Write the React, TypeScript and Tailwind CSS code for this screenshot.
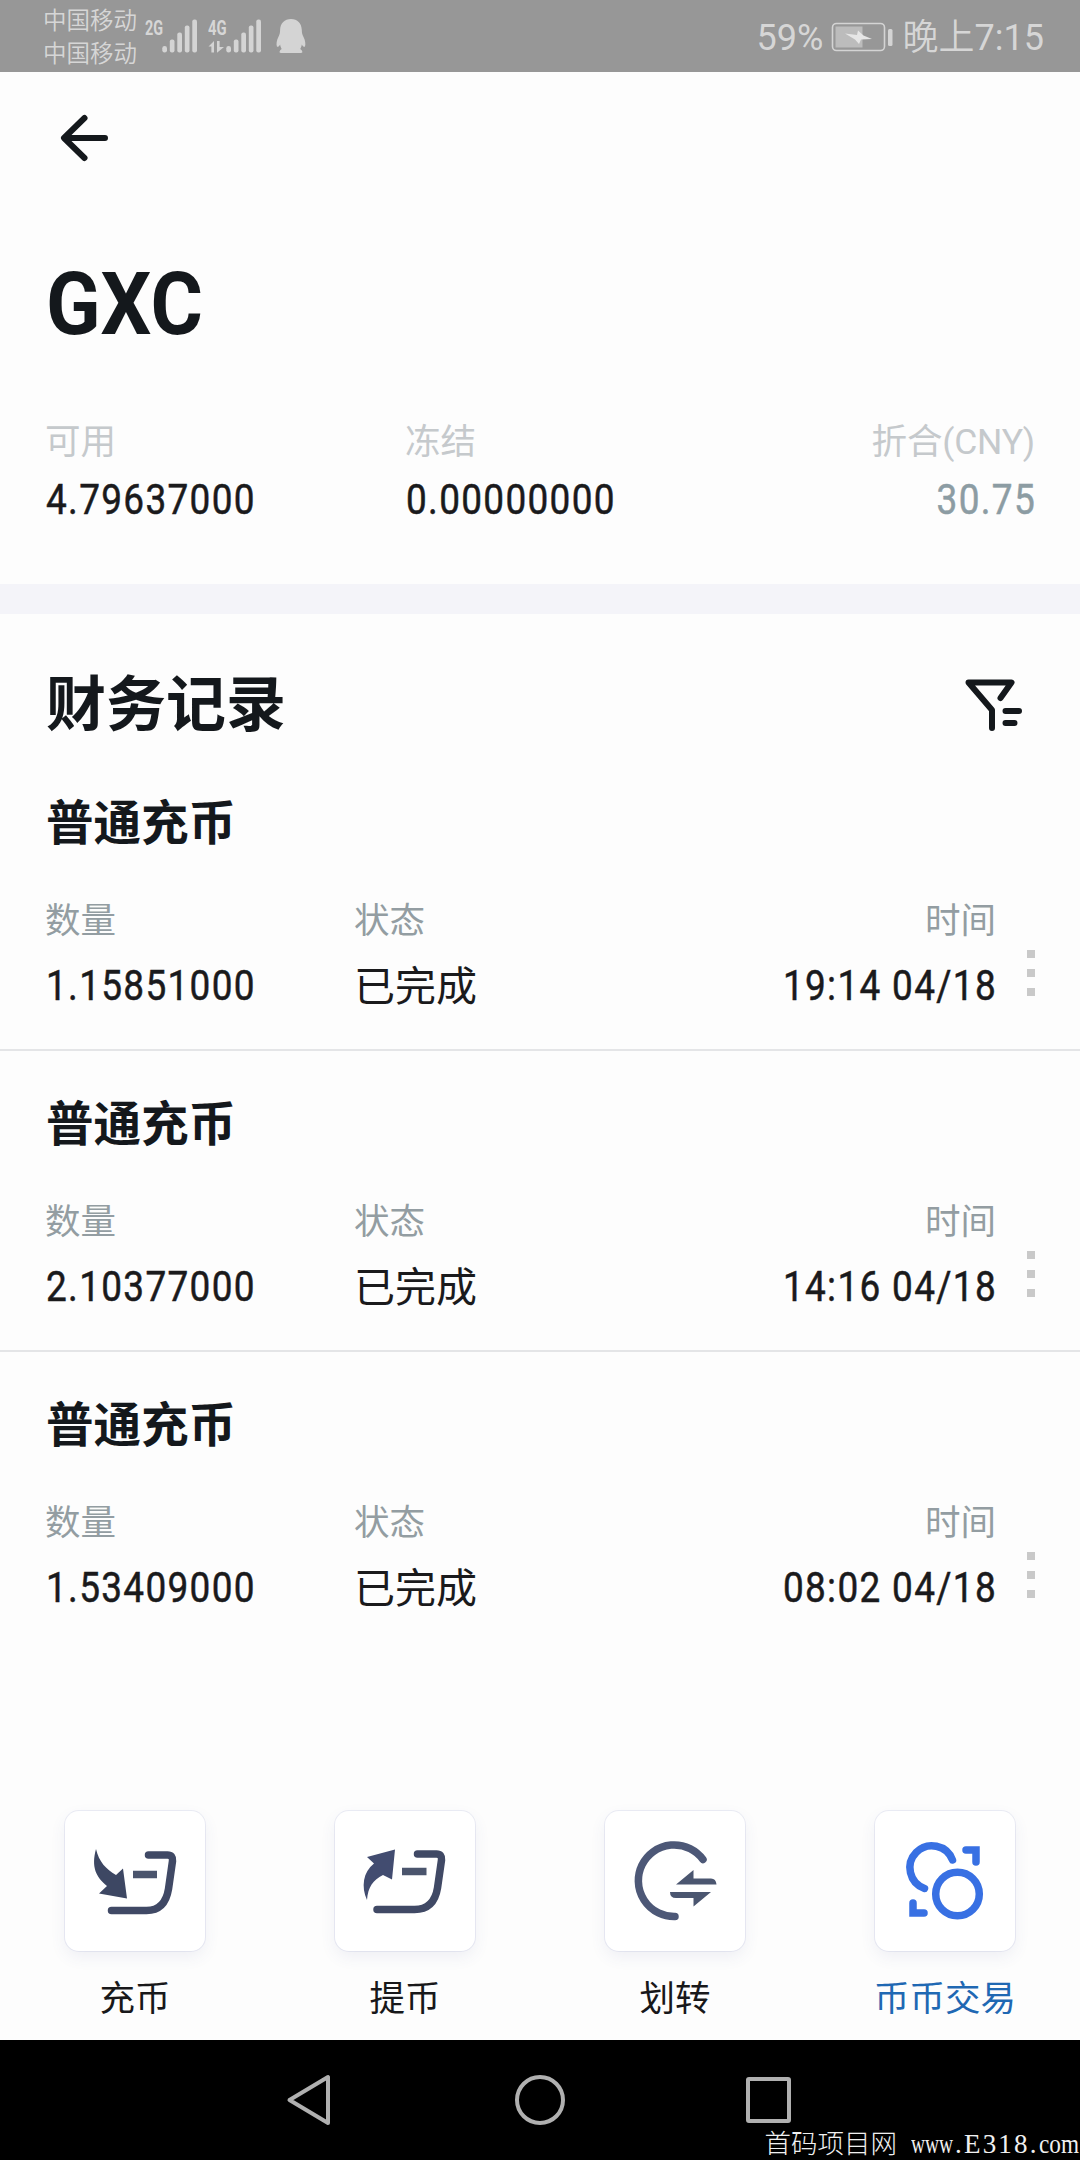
import type { ReactNode } from "react";
import { clsx } from "clsx";

interface FinanceRecord {
  type: string;
  amount: string;
  status: string;
  time: string;
}

const records: FinanceRecord[] = [
  { type: "普通充币", amount: "1.15851000", status: "已完成", time: "19:14 04/18" },
  { type: "普通充币", amount: "2.10377000", status: "已完成", time: "14:16 04/18" },
  { type: "普通充币", amount: "1.53409000", status: "已完成", time: "08:02 04/18" },
];

// Condensed digits with a little air between them
const Num = ({ children, right, className }: { children: ReactNode; right?: boolean; className: string }) => (
  <p
    className={clsx(
      "whitespace-nowrap text-[42px] leading-[50px] tracking-[1.5px] [-webkit-text-stroke:0.5px_currentColor]",
      right ? "mr-[-1px] origin-right scale-x-[0.88]" : "ml-[1px] origin-left scale-x-[0.88]",
      className,
    )}
  >
    {children}
  </p>
);

const SignalBars = () => (
  <svg width="36" height="34" viewBox="0 0 36 34" fill="#d4d4d4">
    <rect x="0.3" y="27" width="4.7" height="6.5" rx="2.3" />
    <rect x="7.8" y="20.5" width="4.7" height="13" rx="2" />
    <rect x="15.3" y="13.5" width="4.7" height="20" rx="2" />
    <rect x="22.8" y="6.5" width="4.7" height="27" rx="2" />
    <rect x="30.3" y="0.5" width="4.7" height="33" rx="2" />
  </svg>
);

const StatusBar = () => (
  <header className="flex h-[72px] justify-between bg-[#979797] pl-[43px] pr-[36px] text-[#d6d6d6]">
    <div className="flex">
      <div className="flex w-[102px] flex-col pt-[5px] text-[23.5px] font-[350] leading-[33px]">
        <span>中国移动</span>
        <span>中国移动</span>
      </div>
      <div className="flex w-[63px] pt-[19px]">
        <div className="w-[17px]">
          <span className="block origin-left scale-x-[0.72] text-[20px] font-bold leading-[18px]">2G</span>
        </div>
        <SignalBars />
      </div>
      <div className="flex w-[68px] pt-[19px]">
        <div className="w-[18px]">
          <span className="block w-[27px] origin-left scale-x-[0.74] text-[20px] font-bold leading-[18px]">4G</span>
          <svg width="18" height="12" viewBox="0 0 18 12" className="mt-[4px]" fill="#d4d4d4">
            <path d="M0.5 5.5L6 0v11.5H3.4V5.5zM9 0h2.6v6H16L9 11.8z" />
          </svg>
        </div>
        <SignalBars />
      </div>
      <svg width="30" height="36" viewBox="0 0 30 36" className="mt-[18px]" fill="#d4d4d4">
        <path d="M15 1C21.5 1 25.5 5 25.8 12c0 3 .5 4.5 1.7 7 1.8 3.5 2.3 7 1.5 9.5-.8 1-2.2-.2-3.2-2-.4 2.2-.8 3-1.6 4.5 1.5.8 2.2 2.3 2.2 3.1 0 .8-1 1-2.500 1H6c-1.5 0-2.500-.2-2.500-1 0-.8.7-2.3 2.2-3.1-.8-1.5-1.200-2.300-1.600-4.500-1 1.800-2.400 3-3.200 2C.1 26 .6 22.5 2.4 19c1.2-2.5 1.7-4 1.7-7C4.4 5 8.5 1 15 1z" />
      </svg>
    </div>
    <div className="flex items-center pt-[4px] text-[36px] leading-[40px]">
      <span className="w-[74px]">59%</span>
      <svg width="64" height="31" viewBox="0 0 64 31" className="mb-[2px] mr-[8px]">
        <rect x="1.5" y="1.5" width="52" height="27" rx="4" fill="none" stroke="#d4d4d4" strokeWidth="1.6" />
        <rect x="4.5" y="4.5" width="27" height="21" fill="#bcbcbc" />
        <path d="M14 11.5l12 1.5 1-4.5 5.5 5L41 17l-11 .5-2 4.5-4-4.5z" fill="#e6e6e6" />
        <rect x="57" y="7" width="4.5" height="17" rx="1.5" fill="#d4d4d4" />
      </svg>
      <span className="font-[350]">晚上</span>
      <span>7:15</span>
    </div>
  </header>
);

const AssetSummary = () => (
  <section className="h-[512px] px-[45px] pt-[38px]">
    <button type="button" className="block h-[56px] pl-[14px]">
      <svg width="52" height="56" viewBox="0 0 52 56" fill="none" stroke="#14181c" strokeWidth="6" strokeLinecap="round" strokeLinejoin="round">
        <path d="M25.5 8L5 28l20.5 20M6 28h40" />
      </svg>
    </button>
    <h1 className="ml-[1px] mt-[94px] h-[88px] w-[200px] origin-left scale-x-[0.91] text-[88px] font-bold leading-[88px] text-[#14181c]">
      GXC
    </h1>
    <div className="mt-[69px] flex">
      <div className="w-[360px]">
        <p className="text-[35.5px] leading-[50px] text-[#c5c9cc]">可用</p>
        <Num className="mt-[8px] text-[#1a1a1c]">4.79637000</Num>
      </div>
      <div className="w-[360px]">
        <p className="text-[35.5px] leading-[50px] text-[#c5c9cc]">冻结</p>
        <Num className="mt-[8px] text-[#1a1a1c]">0.00000000</Num>
      </div>
      <div className="flex-1 text-right">
        <p className="whitespace-nowrap text-[35.5px] leading-[50px] tracking-[-0.2px] text-[#c5c9cc]">折合(CNY)</p>
        <Num right className="mt-[8px] text-[#8c9ca3]">30.75</Num>
      </div>
    </div>
  </section>
);

const FilterIcon = () => (
  <svg width="58" height="56" viewBox="0 0 58 56" fill="none" stroke="#14181c" strokeWidth="6" strokeLinecap="round" strokeLinejoin="round">
    <path d="M35.5 20L46.5 4.5H3.5L27 32v18" />
    <path d="M40.5 33H54M40.5 45h9" />
  </svg>
);

const RecordItem = ({ record, last }: { record: FinanceRecord; last: boolean }) => (
  <li className={clsx("h-[301px] px-[45px]", !last && "border-b-2 border-[#e4e5e7]")}>
    <h3 className="ml-[1px] pt-[44px] text-[47.5px] font-bold leading-[60px] text-[#14181c]">{record.type}</h3>
    <div className="mt-[42px] flex">
      <div className="w-[309px]">
        <p className="text-[35.5px] leading-[50px] text-[#939da2]">数量</p>
        <Num className="mt-[15px] text-[#1a1a1c]">{record.amount}</Num>
      </div>
      <div className="w-[200px]">
        <p className="text-[35.5px] leading-[50px] text-[#939da2]">状态</p>
        <p className="mt-[16px] text-[41px] leading-[50px] text-[#1a1a1c]">{record.status}</p>
      </div>
      <div className="flex-1 text-right">
        <p className="text-[35.5px] leading-[50px] text-[#939da2]">时间</p>
        <Num right className="mt-[15px] text-[#1a1a1c]">{record.time}</Num>
      </div>
      <div className="ml-[31px] flex w-[8px] flex-col gap-[11px] pt-[54px]">
        <i className="size-[8px] bg-[#c9c9c9]" />
        <i className="size-[8px] bg-[#c9c9c9]" />
        <i className="size-[8px] bg-[#c9c9c9]" />
      </div>
    </div>
  </li>
);

const DepositIcon = () => (
  <svg width="140" height="140" viewBox="0 0 140 140" fill="none">
    <path d="M31 38c-5 18 0 28 11 37l-8 7.5 28 5-4-30-7 6.5C41 58 34 51 31 38z" fill="#3d4763" />
    <path d="M83.5 44h19q5.5 0 5 6l-4 28q-3.5 21.5-22 21.5H46.5" stroke="#404965" strokeWidth="7.5" strokeLinecap="round" />
    <path d="M68 63.5h24" stroke="#4b556d" strokeWidth="7.5" />
  </svg>
);

const WithdrawIcon = () => (
  <svg width="140" height="140" viewBox="0 0 140 140" fill="none">
    <path d="M60 38.5L32 46l7 6.5C28 61 26 76 32 89c1-13 6-20 16-25l9 4.5z" fill="#424c70" />
    <path d="M82.5 43h19q5.5 0 5 6l-4 28q-3.5 21.5-23 21.5H42" stroke="#404965" strokeWidth="7.5" strokeLinecap="round" />
    <path d="M67 60.5h24.5" stroke="#4b556d" strokeWidth="7.5" />
  </svg>
);

const TransferIcon = () => (
  <svg width="140" height="140" viewBox="0 0 140 140" fill="none">
    <path d="M98 48.5A35.8 35.8 0 1 0 70 105.5" stroke="#4d5877" strokeWidth="7.5" strokeLinecap="round" />
    <path d="M71 73.5L88.5 59v8.5H106q5 0 5.5 6z" fill="#4b5670" />
    <path d="M65 81h41L88.5 95.5V87H71q-6 0-6-6z" fill="#4b5670" />
  </svg>
);

const TradeIcon = () => (
  <svg width="140" height="140" viewBox="0 0 140 140" fill="none" stroke="#3870e3" strokeWidth="7.5" strokeLinecap="round">
    <path d="M77.5 49A22 22 0 1 0 49.5 77.5" />
    <circle cx="82.5" cy="83" r="21.8" />
    <path d="M91 39h10v12M38 92v10H49" />
  </svg>
);

interface Action {
  label: string;
  icon: ReactNode;
  active?: boolean;
}

const actions: Action[] = [
  { label: "充币", icon: <DepositIcon /> },
  { label: "提币", icon: <WithdrawIcon /> },
  { label: "划转", icon: <TransferIcon /> },
  { label: "币币交易", icon: <TradeIcon />, active: true },
];

const ActionBar = () => (
  <nav className="flex h-[229px]">
    {actions.map((action) => (
      <button key={action.label} type="button" className="flex w-[270px] flex-col items-center">
        <span className="size-[140px] rounded-[14px] bg-white shadow-[0_6px_16px_rgba(60,80,140,0.08),0_0_0_1px_rgba(225,227,240,0.6)]">
          {action.icon}
        </span>
        <span
          className={clsx(
            "mt-[23px] text-[35.5px] leading-[50px]",
            action.active ? "text-[#1f68b3]" : "text-[#18181a]",
          )}
        >
          {action.label}
        </span>
      </button>
    ))}
  </nav>
);

const SystemNav = () => (
  <footer className="relative flex h-[120px] items-center justify-center bg-black">
    <svg width="520" height="60" viewBox="0 0 520 60" fill="none" stroke="#b0b0b0" strokeWidth="4" strokeLinejoin="round">
      <path d="M48 7v46L9.5 30z" />
      <circle cx="260" cy="30" r="23" />
      <rect x="468" y="9" width="41" height="42" rx="1" />
    </svg>
    <p className="absolute bottom-[3px] right-[1px] flex items-center whitespace-pre font-['Liberation_Serif','Noto_Sans_CJK_SC',serif] text-[27px] leading-[26px] text-[#f0f0f0]">
      <span className="mr-[14px] text-[26.5px] font-light">首码项目网</span>
      <span className="w-[44px] origin-left scale-x-[0.72]">www</span>
      <span className="w-[84px] tracking-[2.2px]">.E318.</span>
      <span className="w-[40px] origin-left scale-x-[0.86]">com</span>
    </p>
  </footer>
);

export default function App() {
  return (
    <div className="h-[2160px] w-[1080px] overflow-hidden bg-[#fdfdfd] font-['Roboto','Noto_Sans_CJK_SC',sans-serif]">
      <StatusBar />
      <AssetSummary />
      <div className="h-[30px] bg-[#f4f4f9]" />
      <main className="h-[1197px]">
        <div className="flex h-[136px] items-center justify-between pl-[46px] pr-[57px] pt-[48px]">
          <h2 className="text-[60px] font-bold leading-[80px] text-[#14181c]">财务记录</h2>
          <FilterIcon />
        </div>
        <ul>
          {records.map((record, i) => (
            <RecordItem key={record.time} record={record} last={i === records.length - 1} />
          ))}
        </ul>
      </main>
      <ActionBar />
      <SystemNav />
    </div>
  );
}
